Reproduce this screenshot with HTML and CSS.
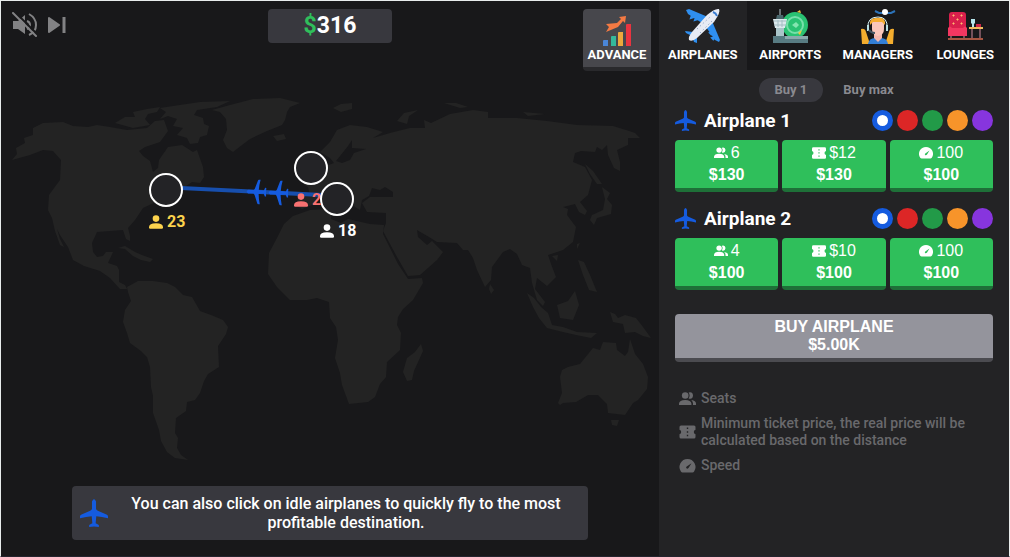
FILE: index.html
```
<!DOCTYPE html>
<html lang="en">
<head>
	<meta charset="utf-8">
	<title>Airports</title>
	<link rel="stylesheet" href="styles.css">
</head>
<body>

<!-- Shared icons -->
<svg class="sprite" aria-hidden="true">
	<symbol id="plane" viewBox="0 0 22 22" preserveAspectRatio="none">
		<path d="M9.4 2Q11 -1.8 12.6 2V7.8Q13 8.6 14 9.2L21.2 12.4Q22 12.8 22 13.6V15.2Q17 13.7 12.8 13.5L12.3 19L14.8 20.4V22L11 21.6L7.2 22V20.4L9.7 19L9.2 13.5Q5 13.7 0 15.2V13.6Q0 12.8 .8 12.4L8 9.2Q9 8.6 9.4 7.8Z"/>
	</symbol>
	<symbol id="person" viewBox="0 0 14 14">
		<circle cx="7" cy="3.6" r="3.3"/>
		<path d="M0 12Q0 8.2 7 8.2T14 12V12.6Q14 13.8 12.8 13.8H1.2Q0 13.8 0 12.6Z"/>
	</symbol>
	<symbol id="people" viewBox="0 0 17 14">
		<circle cx="6.2" cy="3.5" r="3.3"/>
		<path d="M0 11.6Q.4 8 6.2 8T12.4 11.6V13H0ZM9.6 .6Q13.6-.6 14 3.5Q13.6 7.6 9.6 6.4Q11.6 3.5 9.6 .6ZM12.3 8.1Q17 8.8 17 11.6V13H14V11.6Q14 9.6 12.3 8.1Z"/>
	</symbol>
	<symbol id="ticket" viewBox="0 0 16 14">
		<path fill-rule="evenodd" d="M1.5 .5H14.5Q16 .5 16 2V4.8Q14.3 5.3 14.3 7T16 9.2V12Q16 13.5 14.5 13.5H1.5Q0 13.5 0 12V9.2Q1.7 8.7 1.7 7T0 4.8V2Q0 .5 1.5 .5ZM7.3 2.6V4.1H8.7V2.6ZM7.3 6.2V7.7H8.7V6.2ZM7.3 9.8V11.3H8.7V9.8Z"/>
	</symbol>
	<symbol id="gauge" viewBox="0 0 16 14">
		<path fill-rule="evenodd" d="M8 0A8 8 0 0 1 14.6 12.5Q14 13.4 13 13.4H3Q2 13.4 1.4 12.5A8 8 0 0 1 8 0ZM12 4.2L7.2 7.5Q6.2 8.5 7 9.3T9 9.1Z"/>
	</symbol>
</svg>

<div class="game">

	<main class="world">
		<div class="map">
			<svg class="map-land" viewBox="1 1 658 556" aria-hidden="true">
				<g class="land">
					<!-- North America -->
					<path d="M12 160L17 154L16 148L25 143L24 138L33 135L33 128L43 123L63 122L73 126L88 127L97 125L110 127L127 130L147 128L155 121L164 120L168 131L160 142L145 147L139 151L143 156L150 161L153 172L158 168L159 160L168 147L182 145L193 152L197 150L203 167L204 177L200 183L192 182L180 190L160 200L143 208L135 220L128 228L130 236L130 241L126 239L123 230L110 231L97 232L92 243L93 252L97 257L103 256L106 252L113 252L108 263L117 266L119 270L119 282L125 285L127 289L120 289L110 278L100 271L84 266L73 260L68 247L60 235L57 229L60 239L64 247L60 245L55 231L52 218L48 210L49 195L60 180L61 160L53 151L43 150L30 155Z"/>
					<!-- Arctic islands, Greenland, Iceland -->
					<path d="M115 123L125 117L135 117L133 112L147 109L160 107L157 112L148 114L145 119L150 125L133 128Z"/>
					<path d="M160 108L173 106L200 102L230 101L217 107L197 110L194 115L203 118L204 124L209 126L207 135L200 137L198 143L190 144L187 138L177 135L183 128L173 126L177 119L168 116L160 119L166 112Z"/>
					<path d="M212 110L230 105L253 99L280 98L300 103L290 107L287 112L285 120L282 125L267 131L250 139L242 145L233 152L227 148L223 140L227 130L226 119L220 112Z"/>
					<path d="M273 136L284 134L286 139L277 141Z"/>
					<!-- Cuba and Hispaniola -->
					<path d="M118 248L125 246L135 252L142 255L153 259L150 262L141 260L133 256L125 249Z"/>
					<!-- South America -->
					<path d="M127 287L138 281L153 281L167 283L175 287L183 295L192 297L200 311L211 315L223 320L228 327L226 334L218 346L219 367L208 374L204 381L200 393L195 400L187 402L186 411L176 418L175 433L178 438L177 448L181 455L188 460L175 458L167 452L161 441L159 430L153 413L153 396L151 387L150 367L147 357L141 351L130 343L127 333L123 322L125 310L131 301L128 292Z"/>
					<!-- Europe and Asia -->
					<path d="M320 152L330 142L337 130L350 125L367 127L383 132L373 138L390 133L410 128L425 128L424 120L431 123L450 114L473 110L488 112L488 118L517 118L547 121L577 125L613 126L626 130L635 133L640 138L628 138L628 145L617 150L620 162L620 171L614 168L608 155L607 145L602 150L597 147L595 152L581 151L575 153L573 162L585 167L592 180L588 195L580 202L587 211L585 215L579 212L575 204L563 207L568 209L567 215L576 227L573 242L563 250L548 255L551 264L556 277L547 286L537 278L535 289L545 302L543 306L537 300L532 283L530 268L522 265L517 254L510 249L503 252L492 267L491 280L485 287L477 270L473 258L468 250L463 250L457 243L437 242L429 237L417 230L418 237L427 245L432 241L443 252L437 260L420 275L408 276L397 257L383 231L386 223L386 213L367 212L362 203L370 197L393 197L393 192L385 187L380 190L372 188L369 196L362 200L360 210L355 207L350 201L339 193L350 207L346 210L336 200L324 196L318 199L312 205L302 209L297 206L298 195L310 195L308 187L303 184L318 176L326 166L334 163L330 158Z"/>
					<path d="M304 176L309 172L306 163L312 158L314 166L319 173L313 178Z"/>
					<!-- Africa -->
					<path d="M293 216L310 210L327 209L332 212L331 219L341 223L348 219L370 224L384 225L383 234L398 264L408 279L422 278L423 283L413 300L403 309L398 317L397 325L401 333L400 350L387 362L386 377L380 384L375 397L368 402L349 404L342 385L340 373L335 358L338 340L336 327L330 318L329 302L317 298L307 300L290 300L277 287L268 274L269 253L277 238L284 224Z"/>
					<path d="M421 344L423 351L414 371L412 380L407 381L403 372L407 358L415 352Z"/>
					<!-- Indian Ocean and south-east Asia -->
					<path d="M490 284L494 290L491 294L489 289Z"/>
					<path d="M527 293L534 298L541 307L548 313L552 325L563 327L577 332L597 333L591 338L576 335L563 332L547 328L539 318L533 307Z"/>
					<path d="M557 305L568 301L575 291L579 305L573 320L560 318Z"/>
					<path d="M578 260L584 262L590 275L597 292L589 290L583 275Z"/>
					<path d="M552 256L558 255L557 261ZM577 244L580 243L577 249Z"/>
					<path d="M610 312L615 314L618 318L625 315L636 318L643 327L651 338L643 336L635 332L625 333L623 324L613 322Z"/>
					<!-- Japan and Sakhalin -->
					<path d="M585 164L593 171L602 184L597 184L590 174ZM602 187L610 193L607 199L612 205L611 214L597 218L594 225L590 220L592 215L603 210L605 199Z"/>
					<!-- Australia -->
					<path d="M562 370L568 367L580 364L593 348L600 350L603 342L616 343L617 350L625 356L628 352L630 339L635 354L643 364L648 377L647 389L638 400L633 403L625 415L608 413L607 404L598 395L588 395L576 402L563 403L560 405L558 403L562 393L560 377Z"/>
					<path d="M611 420L619 420L617 426L612 425Z"/>
					<!-- Svalbard, Novaya Zemlya and the rest of the far north -->
					<path d="M333 108L341 104L352 103L352 109L341 112ZM397 121L404 113L418 110L409 116L407 124ZM444 103L456 103L468 107L460 108ZM523 112L545 114L528 116Z"/>
				</g>
				<path class="water" d="M336 161L348 146L352 140L352 148L366 149L354 153L350 160L342 163Z"/>
				<path class="route" d="M181 188L322 195"/>
				<g class="flights">
					<use href="#plane" width="25" height="20" transform="translate(246 204) rotate(-88)"/>
					<use href="#plane" width="25" height="20" transform="translate(268 205) rotate(-88)"/>
				</g>
			</svg>

			<button class="airport airport-west" type="button">
				<span class="ring"></span>
				<span class="waiting"><svg class="i14"><use href="#person"/></svg>23</span>
			</button>
			<button class="airport airport-north" type="button">
				<span class="ring"></span>
				<span class="waiting"><svg class="i14"><use href="#person"/></svg>2</span>
			</button>
			<button class="airport airport-south" type="button">
				<span class="ring"></span>
				<span class="waiting"><svg class="i14"><use href="#person"/></svg>18</span>
			</button>
		</div>

		<header class="topbar">
			<div class="sound">
				<button type="button" aria-label="Unmute">
					<svg width="26" height="26" viewBox="0 0 26 26">
						<path d="M1 9H6L13 3V22L6 17H1Z" fill="currentColor"/>
						<path d="M15 9Q18 10 18 13T15 17M17 2Q24 6 24 13T17 23" fill="none" stroke="currentColor" stroke-width="2"/>
						<path d="M2 -1L27 24" stroke="#18181a" stroke-width="2"/>
						<path d="M1 1L24 24" stroke="currentColor" stroke-width="2" stroke-linecap="round"/>
					</svg>
				</button>
				<button type="button" aria-label="Next track">
					<svg width="18" height="16" viewBox="0 0 18 16">
						<path d="M1 1L11 8L1 15Z" fill="currentColor" stroke="currentColor" stroke-width="2" stroke-linejoin="round"/>
						<path d="M16 0V16" stroke="currentColor" stroke-width="3"/>
					</svg>
				</button>
			</div>
			<div class="money"><span>$</span>316</div>
			<button class="advance" type="button">
				<svg width="36" height="34" viewBox="0 0 36 34">
					<path d="M4 29Q4 28 5 28H9V34H4Z" fill="#4a86d8"/>
					<path d="M12 25Q12 24 13 24H17V34H12Z" fill="#35b99b"/>
					<path d="M19 21Q19 20 20 20H24V34H19Z" fill="#eda83c"/>
					<path d="M27 13Q27 12 28 12H32V34H27Z" fill="#e83440"/>
					<path d="M7 20L10 15L7 12L18 11L22 7L20 5L27 4L26 11L24 9L19 15Z" fill="#f47a43"/>
				</svg>
				ADVANCE
			</button>
		</header>

		<div class="tip">
			<svg class="i28"><use href="#plane"/></svg>
			<p>You can also click on idle airplanes to quickly fly to the most profitable destination.</p>
		</div>
	</main>

	<aside class="panel">
		<nav class="tabs">
			<button class="tab active" type="button">
				<svg width="36" height="36" viewBox="0 0 36 36">
					<path d="M1 2L4 1L23 9L17 15L3 6Z" fill="#2f8ff0"/>
					<path d="M27 13L35 32L34 34L30 32L21 19Z" fill="#2f8ff0"/>
					<path d="M0 23L8 24L12 28L12 35L9 34L7 28L1 25Z" fill="#2f8ff0"/>
					<path d="M7 7L6 10L9 9L11 9L10 12L13 11M28 24L25 25L27 27M30 29L27 30L29 32" fill="none" stroke="#2f8ff0" stroke-width="2"/>
					<path d="M4 32Q3 29 7 24L22 7Q30 0 34 1Q36 4 29 14L12 30Q7 34 4 32Z" fill="#e8ebf4"/>
					<path d="M28 4Q31 5 32 8" fill="none" stroke="#3a7cd0" stroke-width="2"/>
					<path d="M12 21L25 9M15 25L27 13" fill="none" stroke="#7890b8" stroke-dasharray="1 3"/>
				</svg>
				AIRPLANES
			</button>
			<button class="tab" type="button">
				<svg width="36" height="36" viewBox="0 0 36 36">
					<circle cx="23" cy="17" r="13" fill="#2ac273"/>
					<circle cx="23" cy="17" r="8" fill="none" stroke="#77dfaa" stroke-width="2"/>
					<path d="M20 17L24 14L27 17L24 20Z" fill="#83e5b0"/>
					<path d="M25 4L28 2L29 5ZM26 25L30 22L28 27Z" fill="#f5c93f"/>
					<path d="M8 1V8" stroke="#b9c8cf" stroke-width="1"/>
					<path d="M5 7H11L12 11H4Z" fill="#49666c"/>
					<path d="M1 11H15L13 20H3Z" fill="#dce9ed"/>
					<path d="M2 13H14M2 17H14M6 12V19M10 12V19" stroke="#a3bcc2"/>
					<path d="M4 20H12V30H4Z" fill="#a9c4c8"/>
					<path d="M1 28H36V35H1Z" fill="#587b82"/>
					<path d="M13 28H36V31H13Z" fill="#8aabad"/>
				</svg>
				AIRPORTS
			</button>
			<button class="tab" type="button">
				<svg width="36" height="36" viewBox="0 0 36 36">
					<path d="M1 21Q5 20 6 24L10 36H2ZM34 21Q30 20 29 24L25 36H33Z" fill="#f4ad2e"/>
					<path d="M8 36Q9 30 15 30H21Q27 30 28 36Z" fill="#337fd6"/>
					<path d="M14 25H22V30L18 34L14 30Z" fill="#f3b7ae"/>
					<path d="M12 13H24V21Q24 27 18 28Q12 27 12 21Z" fill="#fac6bb"/>
					<path d="M10 17Q9 9 17 10Q26 8 25 17L22 14H13Z" fill="#f5ad32"/>
					<path d="M8 20Q7 9 18 9Q28 9 27 20" fill="none" stroke="#d6eff2" stroke-width="1"/>
					<path d="M7 17H9V23H7ZM26 17H28V23H26Z" fill="#b9e0e5"/>
					<path d="M9 22Q11 25 15 25" fill="none" stroke="#455765" stroke-width="2"/>
					<path d="M15 3L19 5H31L35 3" fill="none" stroke="#2c72b8" stroke-width="2"/>
					<circle cx="25" cy="4" r="3" fill="#fff"/>
				</svg>
				MANAGERS
			</button>
			<button class="tab" type="button">
				<svg width="36" height="36" viewBox="0 0 36 36">
					<path d="M2 7Q2 4 5 4H16Q19 4 19 7V20H2Z" fill="#d91f4c"/>
					<path d="M1 20Q3 17 5 20H16Q18 17 20 20V28H1Z" fill="#f23761"/>
					<path d="M6 7H7V8H6ZM14 7H15V8H14ZM10 11H11V12H10ZM6 15H7V16H6ZM14 15H15V16H14Z" stroke="#ffc875" fill="none"/>
					<path d="M4 28V31M17 28V31M25 21V31M33 21V31" stroke="#74515b" stroke-width="2"/>
					<path d="M1 31H36" stroke="#a75642" stroke-width="2"/>
					<path d="M22 20H36" stroke="#eebc60" stroke-width="2"/>
					<path d="M24 11H28V15L26 17L24 15ZM25 16H27V19H25Z" fill="#b6e6ed"/>
					<path d="M29 16H34V19H29Z" fill="#cd2648"/>
				</svg>
				LOUNGES
			</button>
		</nav>

		<div class="amount">
			<button class="pill active" type="button">Buy 1</button>
			<button class="pill" type="button">Buy max</button>
		</div>

		<section class="airplane">
			<div class="airplane-head">
				<svg class="i21"><use href="#plane"/></svg>
				<h2>Airplane 1</h2>
				<div class="colors">
					<input class="blue" type="radio" name="color1" aria-label="Blue" checked>
					<input class="red" type="radio" name="color1" aria-label="Red">
					<input class="green" type="radio" name="color1" aria-label="Green">
					<input class="orange" type="radio" name="color1" aria-label="Orange">
					<input class="purple" type="radio" name="color1" aria-label="Purple">
				</div>
			</div>
			<div class="upgrades">
				<button type="button"><span><svg class="i14"><use href="#people"/></svg>6</span><b>$130</b></button>
				<button type="button"><span><svg class="i14"><use href="#ticket"/></svg>$12</span><b>$130</b></button>
				<button type="button"><span><svg class="i14"><use href="#gauge"/></svg>100</span><b>$100</b></button>
			</div>
		</section>

		<section class="airplane">
			<div class="airplane-head">
				<svg class="i21"><use href="#plane"/></svg>
				<h2>Airplane 2</h2>
				<div class="colors">
					<input class="blue" type="radio" name="color2" aria-label="Blue" checked>
					<input class="red" type="radio" name="color2" aria-label="Red">
					<input class="green" type="radio" name="color2" aria-label="Green">
					<input class="orange" type="radio" name="color2" aria-label="Orange">
					<input class="purple" type="radio" name="color2" aria-label="Purple">
				</div>
			</div>
			<div class="upgrades">
				<button type="button"><span><svg class="i14"><use href="#people"/></svg>4</span><b>$100</b></button>
				<button type="button"><span><svg class="i14"><use href="#ticket"/></svg>$10</span><b>$100</b></button>
				<button type="button"><span><svg class="i14"><use href="#gauge"/></svg>100</span><b>$100</b></button>
			</div>
		</section>

		<button class="buy" type="button">BUY AIRPLANE<br>$5.00K</button>

		<ul class="legend">
			<li><svg class="i17"><use href="#people"/></svg>Seats</li>
			<li><svg class="i17"><use href="#ticket"/></svg>Minimum ticket price, the real price will be calculated based on the distance</li>
			<li><svg class="i17"><use href="#gauge"/></svg>Speed</li>
		</ul>
	</aside>

</div>

</body>
</html>
```
FILE: styles.css
```
* {
	box-sizing: border-box;
}

body {
	margin: 0;
	background: #fff;
	color: #fff;
	font-family: Roboto, "Liberation Sans", sans-serif;
	font-size: 16px;
}

button {
	margin: 0;
	padding: 0;
	border: 0;
	background: none;
	color: inherit;
	font: inherit;
	cursor: pointer;
}

svg {
	flex: none;
	display: block;
}

.sprite {
	position: absolute;
	width: 0;
	height: 0;
}

.i14 { width: 14px; height: 14px; fill: currentColor; }
.i17 { width: 17px; height: 14px; fill: currentColor; }
.i21 { width: 21px; height: 21px; fill: #155bdf; }
.i28 { width: 28px; height: 28px; fill: #155bdf; }

.game {
	display: grid;
	grid-template-columns: 1fr 350px;
	min-height: 100vh;
	border: 1px solid #e8ecec;
	border-bottom-color: #24242e;
}

/* World map */
.world {
	position: relative;
	display: flex;
	flex-direction: column;
	justify-content: space-between;
	overflow: hidden;
	background: #18181a;
}

.map {
	position: absolute;
	top: 0;
	left: 50%;
	width: 658px;
	margin-left: -329px;
}

.land { fill: #232323; }
.water { fill: #18181a; }
.flights { fill: #155bdf; }

.route {
	fill: none;
	stroke: #174fae;
	stroke-width: 4;
}

.airport {
	position: absolute;
	width: 34px;
}

.airport-west { left: 148px; top: 172px; }
.airport-north { left: 293px; top: 150px; }
.airport-south { left: 319px; top: 181px; }

.ring {
	display: block;
	height: 34px;
	border: 2px solid #fff;
	border-radius: 50%;
	background: #232326;
}

.waiting {
	display: flex;
	align-items: center;
	gap: 4px;
	margin-top: 6px;
	font-weight: 700;
	line-height: 18px;
}

.airport-west .waiting { color: #fcd34d; }
.airport-north .waiting { color: #f87171; }

/* Top bar */
.topbar {
	position: relative;
	display: grid;
	grid-template-columns: 1fr 124px 1fr;
	align-items: start;
	padding: 8px;
}

.sound {
	display: flex;
	align-items: center;
	gap: 10px;
	padding: 3px;
	color: #828284;
}

.money {
	border-radius: 4px;
	background: #38383e;
	font-size: 23px;
	font-weight: 700;
	line-height: 34px;
	text-align: center;
}

.money span {
	color: #2fbf5b;
}

.advance {
	justify-self: end;
	display: flex;
	flex-direction: column;
	align-items: center;
	gap: 2px;
	width: 68px;
	padding: 3px 0 5px;
	border-bottom: 4px solid #29292c;
	border-radius: 4px;
	background: #47474c;
	font-size: 13px;
	font-weight: 700;
	line-height: 14px;
}

/* Tip */
.tip {
	position: relative;
	display: flex;
	align-items: center;
	gap: 16px;
	margin: 0 71px 16px;
	padding: 8px;
	border-radius: 4px;
	background: #38383e;
}

.tip p {
	flex: 1;
	margin: 0;
	padding: 0 12px 0 0;
	font-weight: 500;
	line-height: 19px;
	text-align: center;
}

/* Side panel */
.panel {
	background: #232325;
}

.tabs {
	display: grid;
	grid-template-columns: repeat(4, 1fr);
}

.tab {
	display: flex;
	flex-direction: column;
	align-items: center;
	gap: 4px;
	height: 69px;
	padding-top: 7px;
	background: #18181a;
	font-size: 13px;
	font-weight: 700;
	line-height: 14px;
}

.tab.active {
	background: #232325;
}

.amount {
	display: flex;
	justify-content: center;
	gap: 4px;
	padding-top: 8px;
}

.pill {
	padding: 0 16px;
	border-radius: 12px;
	color: #8a8a90;
	font-size: 13px;
	font-weight: 700;
	line-height: 24px;
}

.pill.active {
	background: #38383e;
}

.airplane {
	margin: 0 16px 8px;
}

.airplane-head {
	display: flex;
	align-items: center;
	gap: 8px;
	height: 38px;
	padding-bottom: 1px;
}

.airplane-head h2 {
	flex: 1;
	margin: 0;
	font-size: 19px;
	font-weight: 700;
}

.colors {
	display: flex;
	gap: 4px;
}

.colors input {
	appearance: none;
	width: 21px;
	height: 21px;
	margin: 0;
	border-radius: 50%;
}

.colors input:checked {
	border: 5px solid #155bdf;
	background: #fff;
}

.blue { background: #155bdf; }
.red { background: #dc2626; }
.green { background: #229a48; }
.orange { background: #f7942a; }
.purple { background: #8735de; }

.upgrades {
	display: grid;
	grid-template-columns: repeat(3, 1fr);
	gap: 4px;
}

.upgrades button {
	height: 52px;
	border-bottom: 4px solid #1e7038;
	border-radius: 4px;
	background: #2fbf5b;
	font-family: "Liberation Sans", Arial, sans-serif;
	line-height: 22px;
}

.upgrades span {
	display: flex;
	align-items: center;
	justify-content: center;
	gap: 3px;
}

.upgrades b {
	display: block;
}

.buy {
	display: block;
	width: calc(100% - 32px);
	margin: 24px 16px 28px;
	padding: 4px 0;
	border-bottom: 4px solid #4b4b50;
	border-radius: 4px;
	background: #94949c;
	font-family: "Liberation Sans", Arial, sans-serif;
	font-weight: 700;
	line-height: 18px;
}

.legend {
	display: flex;
	flex-direction: column;
	gap: 8px;
	margin: 0;
	padding: 0 20px;
	color: #69696c;
	font-size: 14px;
	font-weight: 500;
	line-height: 17px;
	list-style: none;
}

.legend li {
	display: flex;
	align-items: center;
	gap: 5px;
}
```
